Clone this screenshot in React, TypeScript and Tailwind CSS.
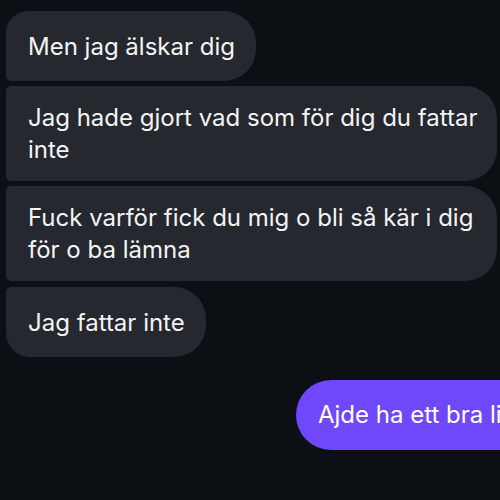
import clsx from 'clsx';

type Pos = 'first' | 'middle' | 'last';

const messages: { lines: string[]; pos: Pos; width?: string }[] = [
  { lines: ['Men jag älskar dig'], pos: 'first' },
  {
    lines: ['Jag hade gjort vad som för dig du fattar', 'inte'],
    pos: 'middle',
    width: 'w-[491px]',
  },
  {
    lines: ['Fuck varför fick du mig o bli så kär i dig', 'för o ba lämna'],
    pos: 'middle',
    width: 'w-[491px]',
  },
  { lines: ['Jag fattar inte'], pos: 'last' },
];

const Bubble = ({ lines, pos, width }: { lines: string[]; pos: Pos; width?: string }) => {
  const classes = clsx(
    'flex flex-col justify-center min-h-[70px] bg-[#25282e] text-[#f4f4f5] pl-[22px] pr-[21px] pt-[16px] pb-[15px] rounded-r-[32px]',
    width ?? 'self-start',
    {
      'rounded-tl-[22px] rounded-bl-[5px]': pos === 'first',
      'rounded-l-[5px]': pos === 'middle',
      'rounded-tl-[5px] rounded-bl-[24px] mt-[1px]': pos === 'last',
    },
  );

  return (
    <div className={classes}>
      {lines.map((line) => (
        <span key={line} className="block whitespace-nowrap text-[24px] leading-[32px]">
          {line}
        </span>
      ))}
    </div>
  );
};

export default function App() {
  return (
    <div className="w-[500px] h-[500px] overflow-hidden bg-[#0c1014] font-['Inter','Noto_Sans',sans-serif]">
      <div className="flex flex-col gap-[5px] pt-[11px] pl-[6px]">
        {messages.map((m) => (
          <Bubble key={m.lines[0]} {...m} />
        ))}
      </div>
      {/* the sent message runs off the right edge, as in the screenshot */}
      <div className="flex mt-[23px] pl-[296px]">
        <div className="flex items-center h-[70px] pl-[22px] pr-[24px] bg-[#7048fb] text-white rounded-l-[35px] whitespace-nowrap text-[24px] leading-[32px]">
          Ajde ha ett bra liv
        </div>
      </div>
    </div>
  );
}
